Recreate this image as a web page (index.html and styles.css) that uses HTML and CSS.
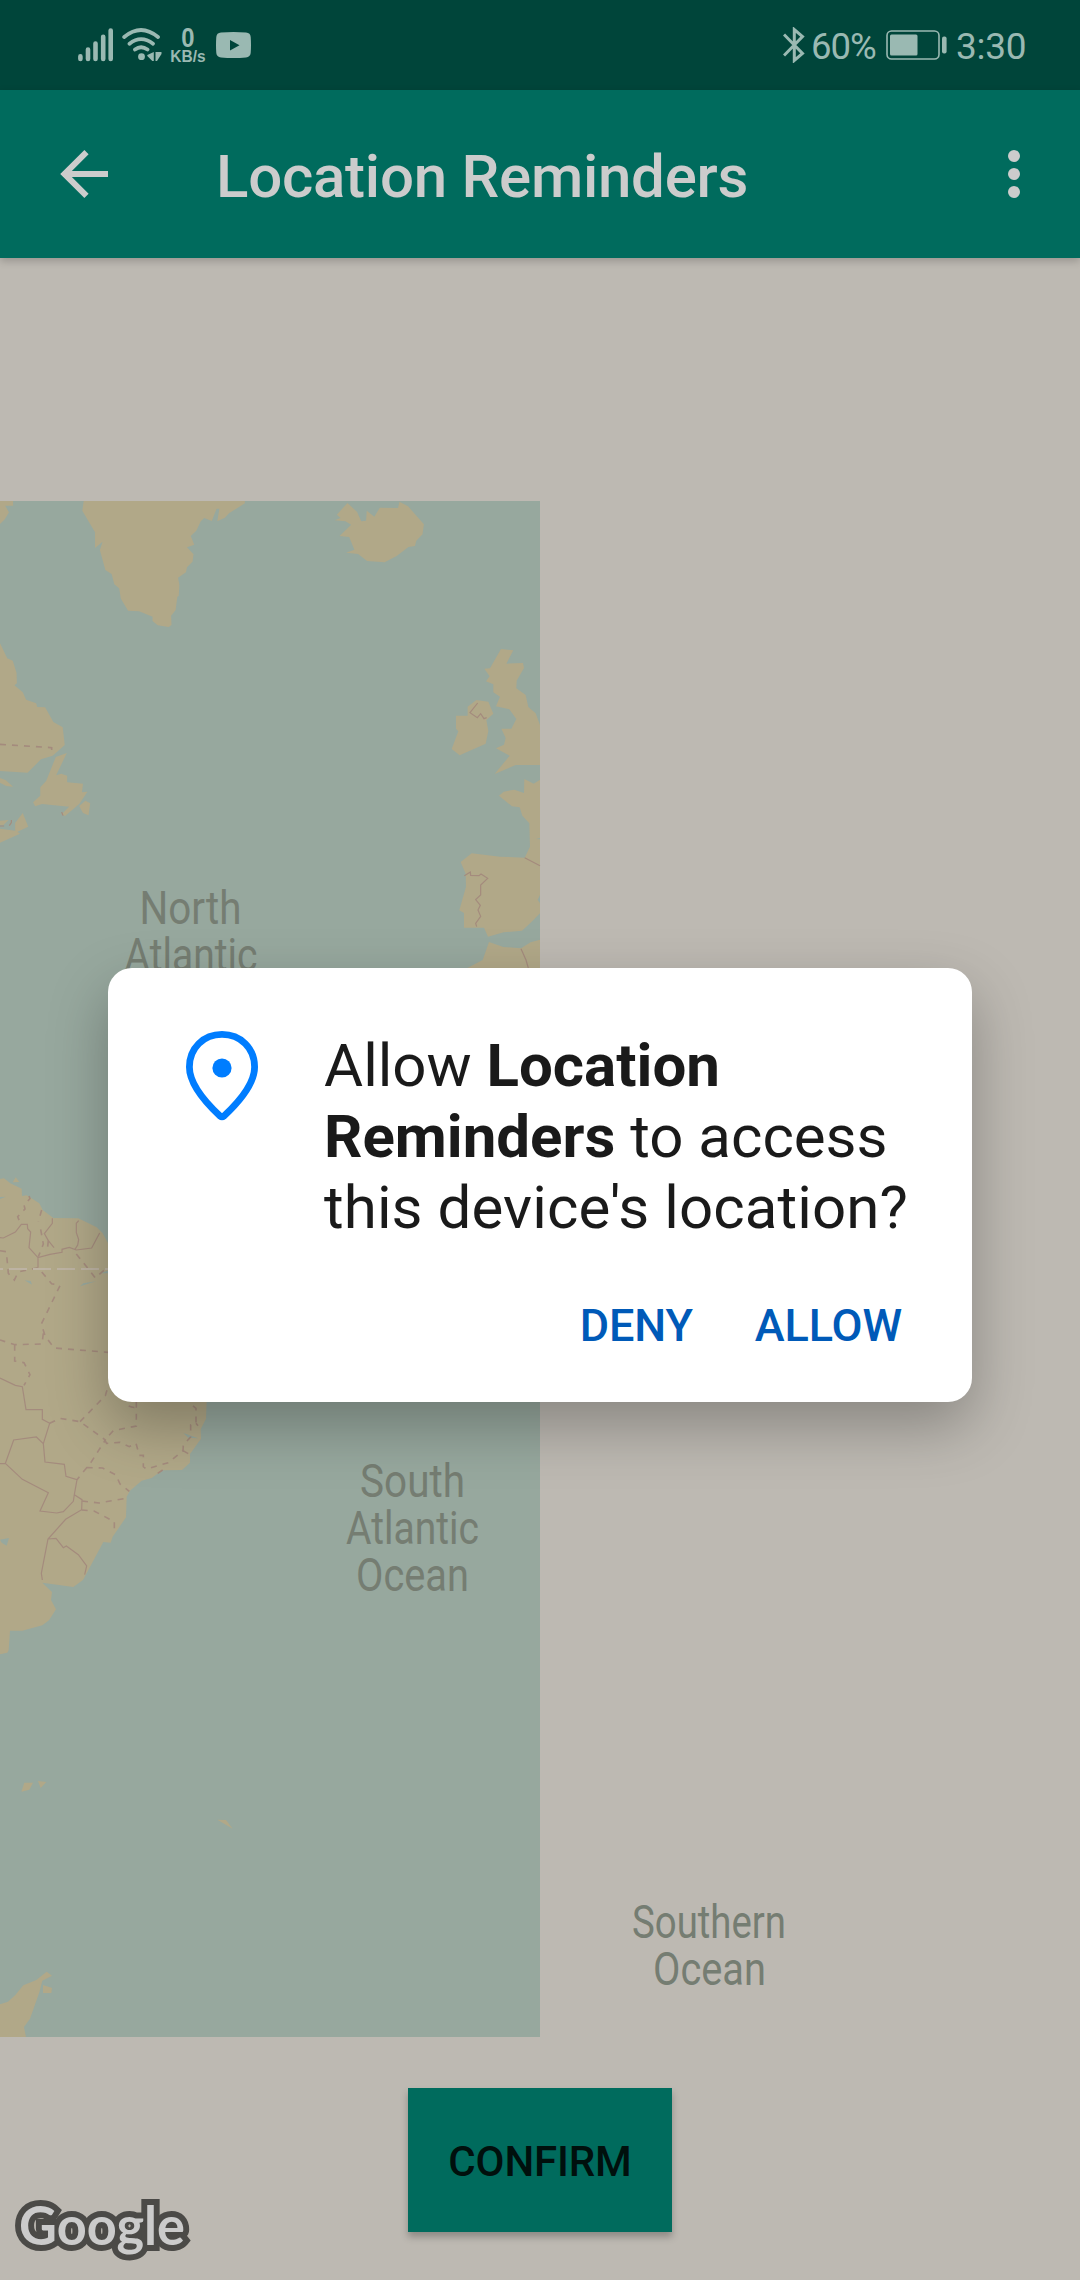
FILE: index.html
```html
<!DOCTYPE html>
<html lang="en">
<head>
<meta charset="utf-8">
<title>Location Reminders</title>
<link rel="stylesheet" href="styles.css">
</head>
<body>
<div class="screen">
  <header class="status-bar">
    <div class="status-left">
      <svg class="signal" width="36" height="34" viewBox="0 0 36 34" stroke="currentColor" stroke-width="4.6" stroke-linecap="round"><path d="M2.4 28.4v2.6M10 21.5v9.500M17.500 15.500v15.500M25.200 8.800v22.200M32.700 2.500v28.500"/></svg>
      <svg class="wifi" width="40" height="34" viewBox="0 0 40 34" fill="none" stroke="currentColor" stroke-width="3.800" stroke-linecap="round"><path d="M2.200 9Q19 -5 36 9M7.500 15.700Q19 6.500 31 15.700M13 21.500Q19 17 25.500 21.500"/><circle cx="19.500" cy="28.700" r="3.400" fill="currentColor" stroke="none"/><path d="M31.800 24v9h-1.500l-5-5v-1zM33.500 24h6v2l-4.500 7h-1.500z" fill="currentColor" stroke="none"/></svg>
      <div class="net-speed"><span class="net-value">0</span><span class="net-unit">KB/s</span></div>
      <svg class="video" width="35" height="26" viewBox="0 0 35 26"><path fill="currentColor" fill-rule="evenodd" d="M5 .6Q17.500-.5 30 .6Q34.500 1 34.700 5Q35.300 13 34.700 21Q34.300 25 30 25.400Q17.500 26.500 5 25.400Q.6 25 .3 21Q-.3 13 .3 5Q.6 1 5 .6ZM14 8V18.500L23.500 13.200Z"/></svg>
    </div>
    <div class="status-right">
      <svg class="bluetooth" width="22" height="36" viewBox="0 0 22 36" fill="none" stroke="currentColor" stroke-width="3"><path d="M1 7.500L19.500 26.500L11.300 33.500V2.500L19.500 9.500L1 28.500"/></svg>
      <span class="battery-level">60%</span>
      <svg class="battery" width="62" height="30" viewBox="0 0 62 30"><rect x="1" y="1" width="52" height="28" rx="4.500" fill="none" stroke="currentColor" stroke-width="1.600"/><rect x="4" y="4.500" width="27.500" height="21" rx="1.500" fill="currentColor"/><rect x="56" y="6.500" width="4.600" height="17" rx="2" fill="currentColor"/></svg>
      <span class="clock">3:30</span>
    </div>
  </header>

  <nav class="app-bar">
    <svg class="back" width="48" height="48" viewBox="0 0 48 48" fill="none" stroke="currentColor" stroke-width="6"><path d="M48 24H5M26.500 2.200L4.500 24L26.500 45.800"/></svg>
    <h1 class="title">Location Reminders</h1>
    <svg class="more" width="12" height="48" viewBox="0 0 12 48" fill="currentColor"><circle cx="6" cy="6" r="6"/><circle cx="6" cy="24" r="6"/><circle cx="6" cy="42" r="6"/></svg>
  </nav>

  <main class="map-area">
    <svg class="map" width="1080" height="2022" viewBox="0 258 1080 2022">
      <rect class="water" x="0" y="501" width="540" height="1536"/>
      <!-- North Atlantic coasts -->
      <g transform="translate(0 490) scale(.34436 .33333)">
        <g class="land">
          <path d="M0 33H38V47H15L26 67L14 88L0 102Z"/>
          <path d="M243 33L239 62L276 127V174L298 155L290 180L306 240L324 252L332 283L346 295L351 326L372 362L404 364L443 380V393L458 406L490 411L498 405L497 377L510 360L515 320L519 318L521 285L517 263L540 247L543 232L559 215L562 193L543 172L564 164L554 138L570 122L583 94L593 84L615 93L629 56H637L631 94L653 83L665 70L711 40V33Z"/>
          <path d="M1009 39L1037 66L1049 94L1063 92L1065 62L1087 80L1103 53L1156 54L1160 35L1185 49L1231 103L1227 133L1209 152L1205 168L1186 171L1152 198L1117 217L1066 213L1040 192L1005 188L1029 179L1014 141L986 138L1020 104L1003 94L972 91L989 84L978 74Z"/>
          <path d="M0 460L21 505L37 512L48 548L49 580L42 586L66 607L76 629L105 640L108 651L131 652L155 696L182 712L188 765L153 797L119 808L80 848L0 843Z"/>
          <path d="M194 789L163 856L178 851L195 857V877L241 881L238 907L254 905L230 942L189 978L179 973L201 950L122 942L102 949L96 937L117 917V892L134 873L162 801Z"/>
          <path d="M248 932L262 940L257 976L241 969L230 948Z"/>
          <path d="M0 864L17 871L38 890L18 888L0 878ZM0 992L25 990L10 1005L0 1005ZM66 969L82 1010L51 1025L58 1031L0 1058V1016L44 1022V999Z"/>
        </g>
        <g class="border">
          <path class="region" d="M0 763L150 773V797"/>
          <path d="M33 990V998L27 1007M0 1008H12M179 966L183 977"/>
        </g>
      </g>
      <!-- Western Europe and Morocco -->
      <g transform="translate(440 640) scale(.33333)">
        <g class="land">
          <path d="M183 27L220 31L199 71L249 69L252 84L230 122L229 145L257 165L265 201L287 220L300 255V375H227L164 402L209 347L168 325L192 314L197 294L184 266H214L229 237L208 208L168 199L180 170L160 157V133L138 124L149 109L133 86L150 85Z"/>
          <path d="M109 180L145 185L160 221L139 240L145 273L137 311L59 346L35 327L55 274L48 266V227H83V200Z"/>
          <path d="M253 417L281 431L300 419V820L275 845L246 872L191 877L144 890L132 863H72V819L58 811L78 740L77 701L62 666L95 640L180 650L254 653L270 620L268 550L247 527L239 502L216 499L177 467L191 455L223 449L252 459Z"/>
          <path d="M147 906L190 921L243 925L272 907L300 899V984H82L128 960Z"/>
        </g>
        <path class="water" d="M300 765L293 779L300 790ZM300 594L288 597L300 598Z"/>
        <g class="border"><path d="M113 189L90 218L112 233L122 221L132 236L140 233M73 707L91 696L92 706L117 707L123 702L143 715L122 735V765L107 779L121 796L114 810L122 829L107 850L110 860M254 653L300 677M243 926L258 960L265 984"/></g>
      </g>
      <!-- South America -->
      <g transform="translate(0 1150) scale(.33333)">
        <g class="land">
          <path d="M0 87L12 85L31 100L65 116L66 138L80 136L118 160L128 180L160 204L235 205L290 232L308 250L330 290L400 420L560 600L620 755L618 806L602 838L603 866L570 912V938L546 960L487 961L455 984L425 992L390 1022L380 1040L378 1102L338 1160L332 1178L310 1176L249 1290L220 1311L127 1298L156 1326L153 1350L168 1378L147 1411L127 1426L67 1442H30L26 1501L22 1508L0 1513Z"/>
          <path d="M47 82L58 96L38 97Z"/>
        </g>
        <path class="water" d="M0 141L18 140L0 147ZM74 391L92 393L96 404ZM240 409L250 400L288 394ZM300 370L330 360V370ZM550 849L595 865L565 863ZM0 1169L27 1164L20 1187L5 1178Z"/>
        <g class="border">
          <path d="M0 263L10 264L46 246L64 223H82L83 236L92 246L87 293L114 323L150 313L186 307V298L208 292L229 300L275 294L299 249M157 205V220L133 251L145 272L162 293M236 212L229 220V248L236 269L233 285L225 298M0 684L46 706L67 710L78 779H127V808L149 820L130 881L109 861L41 870L16 940L0 941M16 940L67 988L145 1028L120 1083L170 1089L190 1085L220 1054L223 1034L231 989L198 979L193 943L135 936L130 881M223 1034L246 1049L245 1079L197 1108L144 1167L124 1270L127 1290M144 1167L168 1165L190 1193L199 1188L235 1214L260 1248L254 1274M114 323V353"/>
          <path class="region" d="M87 138L90 146L72 165L75 177L53 200L62 222M125 180L115 215M122 238L130 282L115 320M145 272L142 298M0 302L19 305L25 370L43 390L55 366L114 353L155 401L180 407L124 522L135 557L162 594L324 607M130 550L126 582L45 584L0 570M44 584V633L72 638L90 674L72 706M229 312L258 348L286 384L315 358M149 820L180 805L240 815L316 870L273 937L260 953L231 989M240 815L316 737L324 710M409 755V828L340 842L314 870L320 880L360 877L388 890L408 880L418 916H430V950L439 957L505 938L549 902L550 885L572 861V825L588 820V775L570 760M386 768Q403 776 420 770M260 953L308 954L348 975L360 1002L388 1024M246 1053L297 1059L378 1045M245 1080L282 1083L343 1115V1144M473 970L488 960M588 820L594 827M549 902L570 914"/>
        </g>
        <path class="equator" d="M-45 357H330"/>
      </g>
      <!-- South Atlantic islands and Antarctic Peninsula -->
      <g class="land" transform="translate(0 1740) scale(.33333)">
        <path d="M73 128H99L88 149L64 155ZM114 123L139 126L122 144ZM652 239L678 240L698 266Z"/>
        <path d="M0 793L24 785L46 765L70 736L109 720L140 695L156 707L127 722L118 757L90 836L72 861L78 891H0ZM129 735L156 744L154 759H129Z"/>
      </g>
      <g class="ocean-label">
        <text x="139.500" y="924" textLength="102" lengthAdjust="spacingAndGlyphs">North</text>
        <text x="124.500" y="971" textLength="133" lengthAdjust="spacingAndGlyphs">Atlantic</text>
        <text x="360" y="1497" textLength="105" lengthAdjust="spacingAndGlyphs">South</text>
        <text x="346" y="1544" textLength="133" lengthAdjust="spacingAndGlyphs">Atlantic</text>
        <text x="356" y="1591" textLength="113" lengthAdjust="spacingAndGlyphs">Ocean</text>
        <text x="632" y="1938" textLength="154" lengthAdjust="spacingAndGlyphs">Southern</text>
        <text x="653" y="1985" textLength="113" lengthAdjust="spacingAndGlyphs">Ocean</text>
      </g>
      <text class="map-logo" x="19" y="2244.500" textLength="166" lengthAdjust="spacingAndGlyphs">Google</text>
    </svg>
    <button class="confirm">CONFIRM</button>
  </main>

  <section class="dialog" role="dialog">
    <div class="dialog-body">
      <svg class="pin" width="74" height="92" viewBox="0 0 74 92"><path fill="none" stroke="#007dff" stroke-width="6.800" stroke-linejoin="round" d="M37 4.400C18.500 4.400 4.400 18 4.400 37C4.400 54 20 72 35 86Q37 87.500 39 86C54 72 69.600 54 69.600 37C69.600 18 55.500 4.400 37 4.400Z"/><circle cx="37" cy="38" r="9.600" fill="#007dff"/></svg>
      <p class="message">Allow <b>Location Reminders</b> to access <span class="last-line">this device's location?</span></p>
    </div>
    <div class="dialog-actions">
      <button class="action deny">DENY</button>
      <button class="action allow">ALLOW</button>
    </div>
  </section>
</div>
</body>
</html>
```
FILE: styles.css
```css
* { box-sizing: border-box; }

body {
  margin: 0;
  font-family: Roboto, "Liberation Sans", sans-serif;
}

button {
  border: 0;
  padding: 0;
  background: none;
  font-family: inherit;
  font-weight: 500;
}

svg { display: block; flex: none; }

.screen {
  position: relative;
  width: 1080px;
  height: 2280px;
  overflow: hidden;
  display: flex;
  flex-direction: column;
  background: #bdb9b2;
}

.status-bar {
  flex: none;
  height: 90px;
  display: flex;
  justify-content: space-between;
  align-items: center;
  padding: 0 54px 0 78px;
  background: #00453a;
  color: #9ab9b2;
}

.status-left,
.status-right { display: flex; align-items: center; }

.wifi { margin-left: 8px; }
.video { margin-left: 10px; }

.net-speed {
  width: 36px;
  margin-left: 8px;
  padding-top: 1px;
  display: flex;
  flex-direction: column;
  align-items: center;
  font-family: "Liberation Sans", sans-serif;
  font-weight: 700;
}

.net-value { font-size: 28px; line-height: 22px; transform: scaleX(.85); }
.net-unit { font-size: 15.500px; line-height: 16px; transform: scaleY(1.05); }

.battery-level { margin-left: 6px; width: 66px; font-size: 36.500px; letter-spacing: -1px; }
.battery { margin-left: 9px; }
.clock { margin-left: 8px; width: 70px; font-size: 37px; letter-spacing: -.3px; }
.battery-level,
.clock { line-height: 44px; white-space: nowrap; padding-top: 4px; }

.app-bar {
  flex: none;
  z-index: 1;
  height: 168px;
  display: flex;
  align-items: center;
  padding: 0 60px;
  background: #006b5d;
  color: #cccccc;
  box-shadow: 0 3px 8px rgba(0, 0, 0, .2);
}

.title {
  flex: 1;
  margin: 5px 0 0 108px;
  font-size: 60px;
  line-height: 72px;
  font-weight: 500;
  letter-spacing: -.25px;
}

.map-area {
  flex: 1;
  display: grid;
}

.map,
.confirm { grid-area: 1 / 1; }

.water { fill: #97a89e; }
.land { fill: #b1a888; }

.border path {
  fill: none;
  stroke: #a48b7d;
  stroke-width: 1.200px;
  vector-effect: non-scaling-stroke;
}

.border .region { stroke-width: 1.600px; stroke-dasharray: 6 6; }

.equator {
  fill: none;
  stroke: #bdb3a3;
  stroke-width: 6px;
  stroke-dasharray: 54 18;
}

.ocean-label {
  font-size: 46px;
  fill: #757d72;
}

.map-logo {
  font-family: Lato, sans-serif;
  font-size: 53px;
  font-weight: 700;
  fill: #cbcbcb;
  stroke: #4b4a47;
  stroke-width: 12px;
  paint-order: stroke;
}

.confirm {
  align-self: end;
  justify-self: center;
  width: 264px;
  height: 144px;
  margin-bottom: 48px;
  padding-top: 3px;
  background: #006b5d;
  color: #00100d;
  font-size: 42px;
  letter-spacing: -.15px;
  box-shadow: 0 5px 7px rgba(0, 0, 0, .25);
}

.dialog {
  position: absolute;
  z-index: 2;
  left: 108px;
  top: 968px;
  width: 864px;
  height: 434px;
  display: flex;
  flex-direction: column;
  justify-content: space-between;
  padding: 60px 60px 42px 77px;
  border-radius: 24px;
  background: #fff;
  box-shadow: 0 24px 60px rgba(0, 0, 0, .28);
}

.dialog-body { display: flex; gap: 65px; }
.pin { margin-top: 2px; }

.message {
  margin: 2px 0 0;
  width: 600px;
  font-size: 60px;
  line-height: 71px;
  color: #1a1a1a;
}

.last-line { letter-spacing: .1px; }

.dialog-actions {
  display: flex;
  justify-content: flex-end;
  gap: 62px;
  padding-right: 10px;
}

.action {
  font-size: 45px;
  line-height: 68px;
  letter-spacing: -.1px;
  color: #005ab8;
}
```
